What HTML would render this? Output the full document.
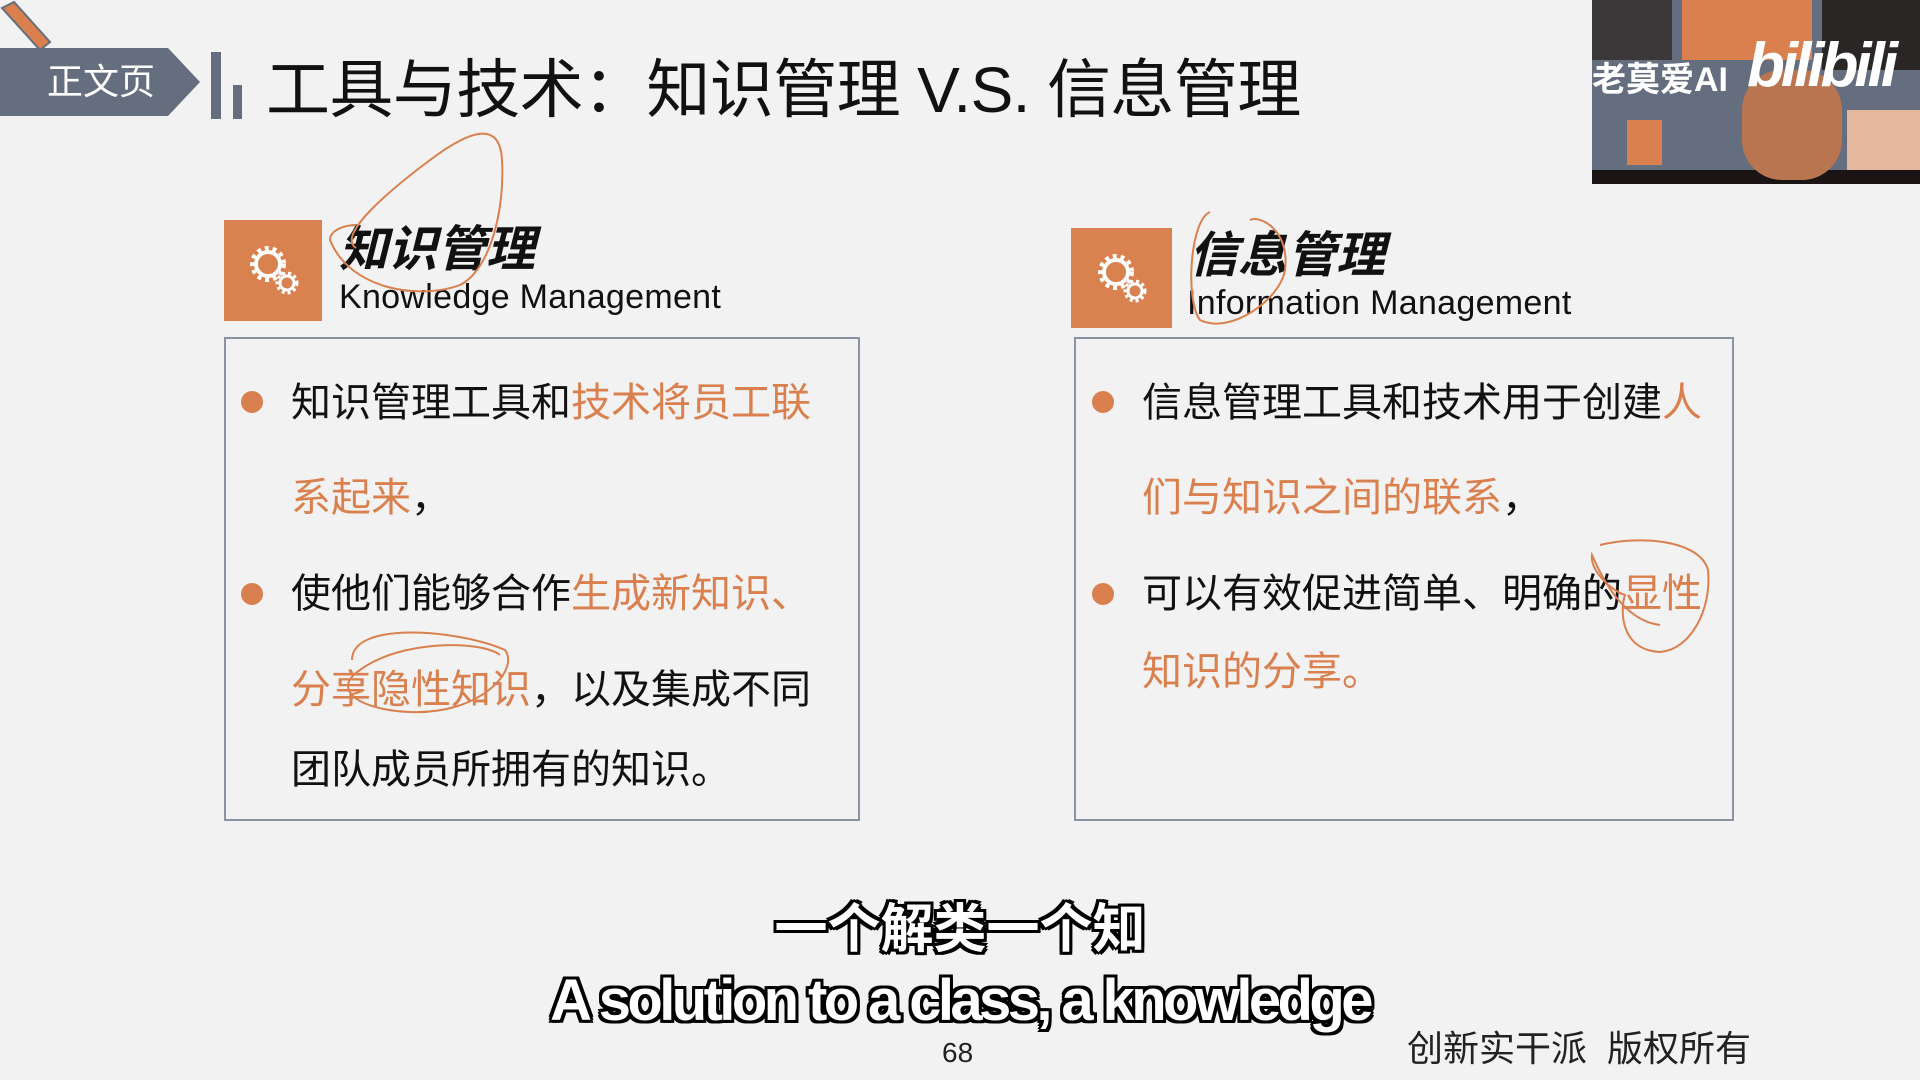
<!DOCTYPE html>
<html><head><meta charset="utf-8">
<style>
*{margin:0;padding:0;box-sizing:border-box}
body{width:1920px;height:1080px;background:#f2f2f2;position:relative;overflow:hidden;font-family:"Liberation Sans","Noto Sans CJK SC",sans-serif;color:#111}
.a{position:absolute;white-space:nowrap}
.o{color:#d9804e}
.box{position:absolute;border:2px solid #8a93a3}
.ib{position:absolute;background:#d9814f}
.bl{position:absolute;width:22px;height:22px;border-radius:50%;background:#d9804e}
.t{font-size:40px;line-height:40px}
.sh{text-shadow:-3px -3px 0 #000,3px -3px 0 #000,-3px 3px 0 #000,3px 3px 0 #000,0 3px 0 #000,0 -3px 0 #000,3px 0 0 #000,-3px 0 0 #000}
</style></head><body>
<svg class="a" style="left:0;top:0" width="60" height="60"><path d="M2,8 L14,2 L50,42 L40,50 Z" fill="#d9804e" stroke="#646e7e" stroke-width="2"/></svg>
<svg class="a" style="left:0;top:48" width="205" height="70"><polygon points="0,0 168,0 200,34 168,68 0,68" fill="#646e7e"/></svg>
<div class="a" style="left:47px;top:60px;font-size:36px;color:#fff;line-height:44px">正文页</div>
<div class="a" style="left:211px;top:52px;width:10px;height:67px;background:#646e7e"></div>
<div class="a" style="left:233px;top:85px;width:9px;height:34px;background:#646e7e"></div>
<div class="a" style="left:266px;top:52px;font-size:64px;line-height:76px;color:#111;letter-spacing:-0.6px">工具与技术：知识管理 V.S. 信息管理</div>
<!-- video -->
<div class="a" style="left:1592px;top:0;width:328px;height:184px;background:#646e7e;overflow:hidden">
 <div class="a" style="left:0;top:0;width:80px;height:60px;background:#3a3838"></div>
 <div class="a" style="left:90px;top:0;width:130px;height:60px;background:#d9804e"></div>
 <div class="a" style="left:230px;top:0;width:98px;height:70px;background:#2a2626"></div>
 <div class="a" style="left:0;top:170px;width:328px;height:14px;background:#1a1414"></div>
 <div class="a" style="left:150px;top:70px;width:100px;height:110px;background:#b8754f;border-radius:40px"></div>
 <div class="a" style="left:255px;top:110px;width:73px;height:60px;background:#e3b89c"></div>
 <div class="a" style="left:35px;top:120px;width:35px;height:45px;background:#d9804e"></div>
 <div class="a" style="left:0;top:52px;font-size:34px;color:#fff;font-weight:bold">老莫爱AI</div>
 <div class="a" style="left:155px;top:30px;font-size:62px;color:#fff;font-weight:bold;font-style:italic;letter-spacing:-4px">bilibili</div>
</div>
<!-- left -->
<div class="ib" style="left:224px;top:220px;width:98px;height:101px"></div>
<svg class="a" style="left:244px;top:240px" width="60" height="60"><circle cx="24" cy="24" r="12" fill="none" stroke="#fff" stroke-width="4"/><circle cx="24" cy="24" r="16" fill="none" stroke="#fff" stroke-width="4" stroke-dasharray="4 4"/><circle cx="43" cy="43" r="7" fill="none" stroke="#fff" stroke-width="3"/><circle cx="43" cy="43" r="10" fill="none" stroke="#fff" stroke-width="3" stroke-dasharray="3 3"/></svg>
<div class="a" style="left:339px;top:222px;font-size:49px;font-weight:bold;font-style:italic;line-height:56px">知识管理</div>
<div class="a" style="left:339px;top:277px;font-size:34px;line-height:40px;letter-spacing:0.3px">Knowledge Management</div>
<div class="box" style="left:224px;top:337px;width:636px;height:484px"></div>
<div class="bl" style="left:241px;top:391px"></div>
<div class="a t" style="left:291px;top:383px">知识管理工具和<span class="o">技术将员工联</span></div>
<div class="a t o" style="left:291px;top:478px">系起来<span style="color:#111">，</span></div>
<div class="bl" style="left:241px;top:583px"></div>
<div class="a t" style="left:291px;top:574px">使他们能够合作<span class="o">生成新知识、</span></div>
<div class="a t" style="left:291px;top:670px"><span class="o">分享隐性知识</span>，以及集成不同</div>
<div class="a t" style="left:291px;top:750px">团队成员所拥有的知识。</div>
<!-- right -->
<div class="ib" style="left:1071px;top:228px;width:101px;height:100px"></div>
<svg class="a" style="left:1092px;top:248px" width="60" height="60"><circle cx="24" cy="24" r="12" fill="none" stroke="#fff" stroke-width="4"/><circle cx="24" cy="24" r="16" fill="none" stroke="#fff" stroke-width="4" stroke-dasharray="4 4"/><circle cx="43" cy="43" r="7" fill="none" stroke="#fff" stroke-width="3"/><circle cx="43" cy="43" r="10" fill="none" stroke="#fff" stroke-width="3" stroke-dasharray="3 3"/></svg>
<div class="a" style="left:1189px;top:228px;font-size:49px;font-weight:bold;font-style:italic;line-height:56px">信息管理</div>
<div class="a" style="left:1187px;top:283px;font-size:34px;line-height:40px;letter-spacing:0.3px">Information Management</div>
<div class="box" style="left:1074px;top:337px;width:660px;height:484px"></div>
<div class="bl" style="left:1092px;top:391px"></div>
<div class="a t" style="left:1142px;top:383px">信息管理工具和技术用于创建<span class="o">人</span></div>
<div class="a t o" style="left:1142px;top:478px">们与知识之间的联系<span style="color:#111">，</span></div>
<div class="bl" style="left:1092px;top:583px"></div>
<div class="a t" style="left:1142px;top:574px">可以有效促进简单、明确的<span class="o">显性</span></div>
<div class="a t o" style="left:1142px;top:652px">知识的分享。</div>
<!-- annotations -->
<svg class="a" style="left:0;top:0" width="1920" height="1080" fill="none" stroke="#d9804e" stroke-width="2">
<path d="M356,248 C336,235 390,190 430,160 C470,130 500,120 502,160 C505,210 490,270 460,285 C420,300 350,290 330,240 C330,230 345,225 356,225"/>
<path d="M352,660 C352,620 460,630 505,650 C520,670 480,715 410,712 C360,710 330,690 360,670 C400,640 480,640 500,655"/>
<path d="M1210,212 C1190,220 1185,300 1200,320 C1230,335 1280,300 1285,270 C1290,230 1260,215 1250,220"/>
<path d="M1600,545 C1640,535 1700,540 1708,570 C1712,610 1690,650 1660,652 C1620,650 1620,610 1625,595 C1610,590 1590,570 1592,555 Q1620,620 1660,625"/>
</svg>
<!-- subtitles -->
<div class="a sh" style="left:0;width:1920px;text-align:center;top:898px;font-size:53px;font-weight:bold;color:#fff;line-height:64px">一个解类一个知</div>
<div class="a sh" style="left:0;width:1920px;text-align:center;top:966px;font-size:58px;font-weight:bold;color:#fff;line-height:70px;letter-spacing:-3.6px">A solution to a class, a knowledge</div>
<div class="a" style="left:942px;top:1037px;font-size:28px;color:#222">68</div>
<div class="a" style="left:1407px;top:1028px;font-size:36px;color:#222;line-height:42px">创新实干派&nbsp;&nbsp;版权所有</div>
</body></html>
